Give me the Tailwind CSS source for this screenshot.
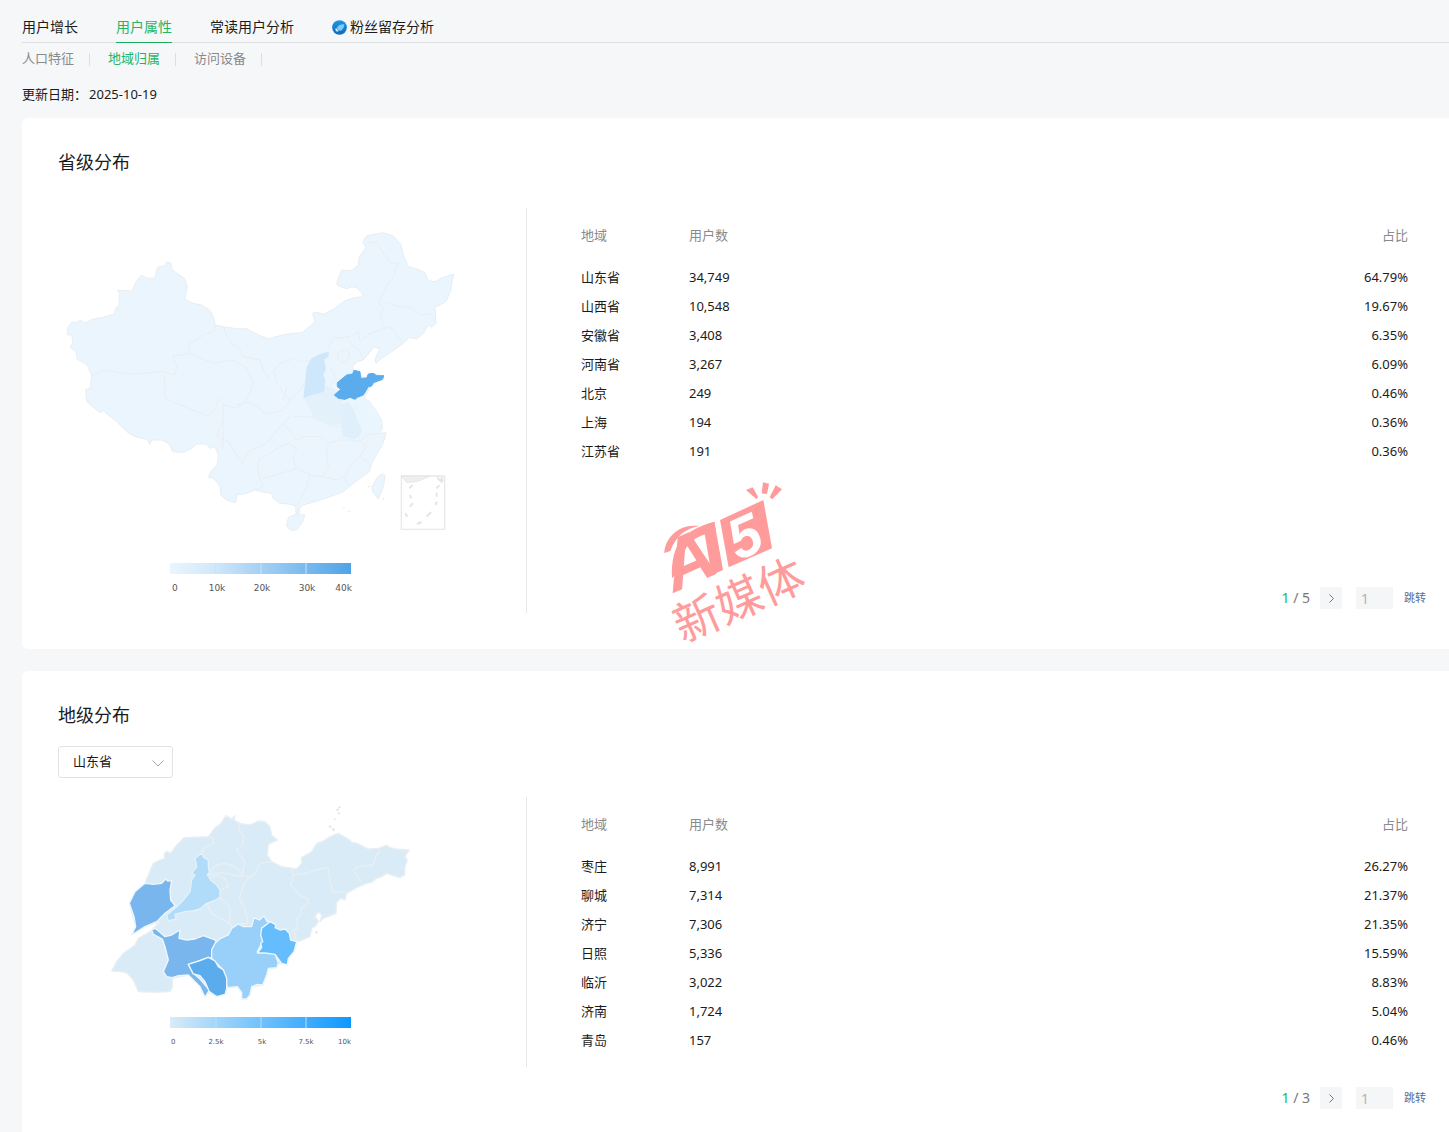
<!DOCTYPE html>
<html lang="zh-CN">
<head>
  <meta charset="UTF-8">
  <meta name="viewport" content="width=device-width, initial-scale=1.0">
  <title>用户属性 - 地域归属</title>
  <script src="https://cdn.jsdelivr.net/npm/@tailwindcss/browser@4"></script>
</head>
<body class="min-h-screen overflow-x-hidden bg-[#f6f7f9] pl-[22px] font-['Noto_Sans','Noto_Sans_CJK_SC',sans-serif] text-[13px] text-[#1a1b1c]">

  <!-- Main tabs -->
  <nav class="flex gap-[38px] border-b border-[#dddfe1] pt-3 text-sm">
    <a href="#" class="-mb-px flex h-[31px] items-center border-b border-transparent">用户增长</a>
    <a href="#" class="-mb-px flex h-[31px] items-center border-b border-[#1aad5c] text-[#22b566]">用户属性</a>
    <a href="#" class="-mb-px flex h-[31px] items-center border-b border-transparent">常读用户分析</a>
    <a href="#" class="-mb-px flex h-[31px] items-center gap-[3px] border-b border-transparent">
      <svg class="size-[15px]" viewBox="0 0 45 45" aria-hidden="true">
        <defs>
          <linearGradient id="badge" x1="0" y1="0" x2="0" y2="1">
            <stop offset="0" stop-color="#1e96e3"/>
            <stop offset="1" stop-color="#1268b8"/>
          </linearGradient>
        </defs>
        <circle cx="22.500" cy="22.500" r="22" fill="url(#badge)"/>
        <path d="M16 20Q23 12 37 13Q38 22 30 30Q24 34 18 30Q13 26 16 20Z" fill="#7ccbf8"/>
        <path d="M10 29Q10 25 13 25Q16 30 20 33Q17 36 13 34Z" fill="#d8f1ff"/>
      </svg>
      粉丝留存分析
    </a>
  </nav>

  <!-- Sub tabs -->
  <nav class="flex h-8 items-center text-[#888a8c]">
    <a href="#">人口特征</a>
    <span class="mr-[18px] ml-[15px] h-[13px] w-px bg-[#dcdee0]"></span>
    <a href="#" class="text-[#22b566]">地域归属</a>
    <span class="mr-[18px] ml-[15px] h-[13px] w-px bg-[#dcdee0]"></span>
    <a href="#">访问设备</a>
    <span class="ml-[15px] h-[13px] w-px bg-[#dcdee0]"></span>
  </nav>

  <p class="flex gap-[2px] pt-[9px] pb-[14px] leading-5"><span>更新日期：</span><time datetime="2025-10-19">2025-10-19</time></p>

  <!-- Provinces -->
  <section class="relative rounded-l-md bg-white pt-[30px] pb-9 pl-9">
    <h2 class="text-lg leading-7">省级分布</h2>
    <div class="mt-8 flex">
      <div class="w-[469px] shrink-0 self-start border-r border-[#e4e6e8]">
        <svg class="block w-full" viewBox="58 208 468 405" role="img" aria-label="省级分布地图">
          <defs>
            <linearGradient id="scaleProvince">
              <stop offset="0" stop-color="#ebf5fd"/>
              <stop offset="0.250" stop-color="#d0e7fa"/>
              <stop offset="1" stop-color="#4ea3e8"/>
            </linearGradient>
          </defs>
          <g transform="translate(50 220) scale(.33333)" stroke="#e9edf1" stroke-width="3" stroke-linejoin="round">
            <!-- mainland -->
            <path fill="#ebf5fd" d="M52 345V325L65 306L78 308L92 300L105 310L125 298L160 292L193 281L197 265L207 255L208 218L202 211L246 213L254 195L262 180L275 165L290 174L315 175L322 142L345 137L350 126L362 128L367 150L385 163L403 175L412 200L404 238L430 250L455 255L480 272L490 290L496 315L520 320L560 326L590 326L625 345L655 356L705 343L755 338L785 315L795 305L788 280L800 276L820 283L850 268L880 245L905 235L935 230L938 222L920 203L905 200L890 206L865 198L860 190L875 150L905 152L925 135L928 110L948 82L938 65L950 48L975 42L1000 38L1030 48L1052 72L1060 105L1075 140L1100 146L1125 158L1135 182L1155 185L1180 172L1212 162L1205 190L1202 215L1195 228L1188 245L1155 262L1158 310L1146 322L1135 315L1120 340L1100 357L1078 352L1060 370L1025 395L995 415L978 430L975 418L990 385L972 382L955 402L940 420L920 425L908 440L912 455L930 458L935 475L950 473L965 460L1000 468L965 495L942 535L960 545L978 572L995 600L998 628L985 640L1008 638L1000 668L985 695L965 730L958 755L930 775L900 798L880 815L840 830L805 842L760 855L748 865V880L738 882L737 858L715 852L690 850L670 836L664 820L635 816L615 810L590 820L560 825L557 848L530 840L512 825L510 800L492 775L475 772L485 750L502 735L505 705L495 680L480 685L470 672L440 672L425 685L400 697L368 695L358 672L335 660L305 660L300 673L292 658L255 650L230 635L200 605L160 573L150 578L110 545L107 508L120 505L125 468L112 435L82 418L78 395L60 382L68 370L66 345Z"/>
            <!-- islands -->
            <path fill="#ebf5fd" d="M715 892L735 884L765 885L758 905L740 930L722 931L710 918ZM985 768L1000 761L1005 770L1000 800L985 837L968 815L966 800Z"/>
            <!-- province borders -->
            <path fill="none" d="M125 468L160 450L240 463L340 455L375 465L380 440L368 408L400 405L415 398L490 430L545 420L585 440L610 485L600 520L580 550L560 565L520 555L505 535L495 570L475 588L440 575L345 535L343 470M415 395L420 370L460 345L490 335L496 315M520 320L530 350L550 375L565 380L580 410L630 420L640 450L660 480M520 555L518 690M560 555L600 545L650 582L700 570L720 540L700 520L690 500M518 600L500 650L535 665L575 730L600 690L630 680L660 660L680 630L700 610L720 590M625 720L660 700L690 680L715 670L740 685L730 715L740 745L710 755L640 775L625 765ZM625 765L640 800L615 810M740 660L760 650L815 650L835 670L830 700L835 740L820 770L780 765L740 745M700 610L740 660M835 670L870 660L905 660L930 665L925 640L880 625L830 610L780 590L730 590M930 665L950 680L930 710L905 730L885 770L860 780L820 770M780 765L770 800L745 850M885 770L890 790L900 798M930 710L960 730M985 640L950 645L930 665M995 620L960 610L930 580L915 560L930 540M680 490L670 455L690 430L735 415L750 425L790 420L810 405L835 400M720 540L750 510L765 490M710 500L700 540M835 380L850 355L900 350L925 335L930 365L960 340L1005 325L1020 320L1040 345L1060 368M865 395L885 388L900 400L890 425L875 428L862 412ZM890 350L905 375L925 385L940 420M840 440L860 480L840 495M1005 325L990 290L1000 265L985 245L1010 200L1030 170L1045 130L1025 130L1000 100L980 65L950 70M1000 245L1040 258L1090 265L1110 285L1140 280L1158 300"/>
            <!-- 山西 / 河南 / 安徽 / 江苏 / 山东 -->
            <path fill="#e3f1fb" stroke="none" d="M762 533L800 520L825 498L850 503L860 525L885 535L870 555L878 590L865 615L830 608L790 590Z"/>
            <path fill="#e0effc" stroke="none" d="M870 555L895 545L910 565L920 595L932 620L935 640L915 658L880 650L870 600Z"/>
            <path fill="#e9f6fd" stroke="none" d="M918 540L942 537L965 550L995 605L985 625L950 615L925 575Z"/>
            <path fill="#cfe7fa" stroke="none" d="M760 535L764 500L770 440L785 415L810 402L836 395V410L822 420L828 445L820 465L826 480L822 515L785 525Z"/>
            <path fill="#5aacec" stroke="#5aacec" d="M853 525L872 508L862 500V488L890 465L908 462L912 451L930 455L932 475L950 474L955 462L970 460L980 467H1001L998 478L970 488L965 498L955 500L940 525L922 532L915 538L900 532L885 538L865 535Z"/>
            <!-- South China Sea inset -->
            <path fill="none" stroke="#e8e9eb" stroke-width="4" d="M1054 768H1184V928H1054Z"/>
            <path fill="#efefef" stroke="#e4e5e7" d="M1054 768H1140L1100 785L1070 787Z"/>
            <path fill="none" stroke="#e4e5e7" stroke-width="6" d="M1078 805L1088 795M1080 825L1084 835M1079 860L1089 850M1066 880L1072 890M1101 912L1115 906M1130 890L1143 876M1156 855L1161 845M1160 830V818M1160 805L1168 796M1162 772L1170 782L1178 771M1173 788L1180 778"/>
            <path fill="none" stroke="#e0e4e8" d="M955 800H960M894 873L899 875M880 864H883M1001 834V839"/>
          </g>
          <!-- scale -->
          <rect x="170" y="563" width="181" height="11" fill="url(#scaleProvince)"/>
          <path d="M215.500 563V574M261 563V574M306 563V574" stroke="#c5e2fa" fill="none"/>
          <g class="text-[9px]" fill="#555" font-family="DejaVu Sans, sans-serif">
            <text x="172" y="591">0</text>
            <text x="217" y="591" text-anchor="middle">10k</text>
            <text x="262" y="591" text-anchor="middle">20k</text>
            <text x="307" y="591" text-anchor="middle">30k</text>
            <text x="352" y="591" text-anchor="end">40k</text>
          </g>
        </svg>
      </div>
      <div class="flex grow flex-col justify-between pb-1">
        <div class="pr-[41px] pl-[54px]">
          <table class="w-full">
            <thead>
              <tr class="h-[55px] text-left text-[#888a8c]">
                <th class="w-[108px] font-normal">地域</th>
                <th class="font-normal">用户数</th>
                <th class="text-right font-normal">占比</th>
              </tr>
            </thead>
            <tbody>
              <tr class="h-[29px]"><td>山东省</td><td>34,749</td><td class="text-right">64.79%</td></tr>
              <tr class="h-[29px]"><td>山西省</td><td>10,548</td><td class="text-right">19.67%</td></tr>
              <tr class="h-[29px]"><td>安徽省</td><td>3,408</td><td class="text-right">6.35%</td></tr>
              <tr class="h-[29px]"><td>河南省</td><td>3,267</td><td class="text-right">6.09%</td></tr>
              <tr class="h-[29px]"><td>北京</td><td>249</td><td class="text-right">0.46%</td></tr>
              <tr class="h-[29px]"><td>上海</td><td>194</td><td class="text-right">0.36%</td></tr>
              <tr class="h-[29px]"><td>江苏省</td><td>191</td><td class="text-right">0.36%</td></tr>
            </tbody>
          </table>
        </div>
        <div class="mt-8 flex h-[22px] items-center justify-end pr-[23px]">
          <span class="mr-[10px] text-sm text-[#777]"><span class="text-[#22b566]">1</span> / 5</span>
          <button type="button" aria-label="下一页" class="mr-[14px] flex size-[22px] items-center justify-center bg-[#f5f6f8]">
            <svg class="h-[9px] w-[5px]" viewBox="0 0 5 9" fill="none" stroke="#777"><path d="M.5.5L4.500 4.500L.5 8.500"/></svg>
          </button>
          <input type="text" placeholder="1" aria-label="省级页码" class="mr-[11px] h-[22px] w-[37px] bg-[#f5f6f8] pl-[5px] text-sm placeholder:text-[#b2b4b6]">
          <a href="#" class="text-[11px] text-[#576b95]">跳转</a>
        </div>
      </div>
    </div>

    <!-- Watermark -->
    <svg class="pointer-events-none absolute top-[352px] left-[628px] z-10 h-[190px] w-[170px] overflow-visible" viewBox="0 0 510 570" fill="#ff9b9b" role="img" aria-label="A5新媒体">
      <path d="M288 60L308 52L324 80L320 88ZM339 37L357 41L351 72L335 70ZM377 46L396 58L367 88L359 82Z"/>
      <path d="M43 249C45 205 85 160 148 168C105 176 78 198 61 243Z"/>
      <path d="M66 325C62 215 105 180 193 155L198 184C130 200 98 220 91 300Z"/>
      <path d="M160 168L193 155L219 300L185 315Z"/>
      <path d="M210 150L340 90L366 235L236 292Z"/>
      <text transform="translate(72 368) rotate(-24)" font-family="Liberation Sans, sans-serif" font-weight="700" font-style="italic" font-size="215">A</text>
      <text transform="translate(264 273) rotate(-24)" font-family="Liberation Sans, sans-serif" font-weight="700" font-style="italic" font-size="172" fill="#fff">5</text>
      <text transform="translate(98 520) rotate(-24)" font-family="Noto Sans CJK SC, sans-serif" font-size="138">新媒体</text>
    </svg>
  </section>

  <!-- Cities -->
  <section class="mt-[22px] rounded-tl-md bg-white pt-[30px] pb-5 pl-9">
    <h2 class="text-lg leading-7">地级分布</h2>
    <div class="relative mt-[17px] w-[115px]">
      <select aria-label="选择省份" class="h-8 w-full appearance-none rounded-[3px] border border-[#e1e3e5] bg-white pl-[14px]">
        <option>山东省</option>
      </select>
      <svg class="pointer-events-none absolute top-[14px] right-[9px] h-[7px] w-3" viewBox="0 0 12 7" fill="none" stroke="#a5a7a9"><path d="M.5.5L6 6L11.500.5"/></svg>
    </div>
    <div class="mt-[19px] flex">
      <div class="w-[469px] shrink-0 self-start border-r border-[#e4e6e8]">
        <svg class="block w-full" viewBox="58 797 468 270" role="img" aria-label="地级分布地图">
          <defs>
            <linearGradient id="scaleCity">
              <stop offset="0" stop-color="#d9ebf6"/>
              <stop offset="0.250" stop-color="#a3d6fa"/>
              <stop offset="1" stop-color="#0d98ff"/>
            </linearGradient>
          </defs>
          <g transform="translate(100 795) scale(.33333)" stroke="#e9eff2" stroke-width="4" stroke-linejoin="round">
            <path fill="#d9ebf6" d="M95 420L107 395L88 325L105 290L135 265L145 240L160 205L180 195L195 190L192 178L200 168L212 175L228 152L252 128L325 125L345 98L360 88L378 62L395 72L405 62L402 75L420 85L450 90L475 78L495 80L510 95L515 120L532 135L505 148L502 180L515 200L545 215L590 222L605 205L604 188L635 170L650 145L670 138L690 125L715 115L732 125L750 135L755 142L772 145L790 155L805 162L835 160L860 150L870 158L890 162L928 165L915 185L922 195L915 215L914 240L900 248L880 242L860 235L845 245L830 250L815 262L800 265L770 278L740 295L735 315L722 310L710 322L708 355L670 370L660 380L665 360L655 350L645 365L655 378L648 392L635 400L630 425L600 438L590 440L582 470L565 490L562 510L535 505L530 518L505 520L500 540L488 570L455 575L450 600L440 612H425V592L412 575L382 578L378 595L350 605L328 592L315 607L300 575L285 555L265 540L217 550L218 575L210 590L165 592L115 590L100 555L82 535L65 530L35 528L50 500L70 475L105 450L115 430L150 410L180 380L135 395Z"/>
            <path fill="none" d="M325 125L340 130V145L310 160L305 175M420 85L415 105L430 120L428 150L410 165L420 180L435 200L425 245L380 235L360 232L325 240M325 235L350 210L375 205L405 215L430 240L450 248L465 235L480 205L515 200M330 250L350 240L375 252L385 275L360 285M425 285L435 260L450 248M425 285L418 310L435 340L445 385L415 387M320 325L335 355L390 385L395 400M320 325L360 308L390 335L390 385M575 222L580 240L620 235L645 225L685 218L692 270L700 292L740 290M580 240L572 270L605 305L625 310L622 325L605 340L602 360L590 370L593 400L580 405L590 440M760 225L775 215L820 210L825 190L840 165M760 225L785 262M187 432L195 455L205 495L190 530L217 550"/>
            <path fill="#78b6ed" stroke="#eef7fd" d="M95 420L107 395L102 365L88 325L105 290L135 265L160 268L185 265L197 252L203 258L215 257L210 285L212 315L225 332L195 355L170 380L135 395Z"/>
            <path fill="#b0dcfa" stroke="#e3f2fc" d="M305 175L312 188L325 195V215L328 232L322 240L332 255L350 270L360 285V308L340 318L320 325L300 342L278 348L255 350L225 358L228 372L205 378L200 360L230 335L250 315L270 290L275 255L285 240L275 235L290 215L285 190Z"/>
            <path fill="#78b6ed" stroke="#eef7fd" d="M155 405L165 400L180 412L195 425L215 420L240 405L237 430L260 435L285 432L310 422L345 435L350 445L335 465V490L325 487L290 500L265 508L280 535L300 552L328 585L315 607L300 575L265 540L235 542L217 548L200 545L190 530L205 495L195 455L187 432L160 418Z"/>
            <path fill="#98d0fa" stroke="#eef7fd" d="M345 445L362 430L385 420L395 400L415 387L430 395L455 395L462 368L478 375L492 362L500 378L510 380L485 400L488 440L472 470L525 475L535 505L530 518L505 520L500 540L488 570L472 568L455 575L450 600L440 612H425V592L412 575L382 578L370 525L335 490V465Z"/>
            <path fill="#5aacec" stroke="#eef7fd" d="M325 487L345 498L355 515L370 525L380 550V580L375 598L350 605L328 590L315 560L300 542L280 537L265 508L300 497Z"/>
            <path fill="#65bdfd" stroke="#eef7fd" d="M510 380L528 390L525 398L540 405L555 402L568 415L572 435L590 440L582 470L565 490L562 510L545 505L525 478L495 474L472 474L485 458L482 445L488 440L482 420L485 400Z"/>
            <path fill="none" stroke="#dadfe3" stroke-width="5" d="M689 98L692 92M698 100L703 107M702 73H706M710 47L715 42M715 57L719 53M716 38L721 36M648 415L651 409"/>
          </g>
          <!-- scale -->
          <rect x="170" y="1017" width="181" height="11" fill="url(#scaleCity)"/>
          <path d="M216 1017V1028M261 1017V1028M306 1017V1028" stroke="#b9e0fc" fill="none"/>
          <g class="text-[7px]" fill="#555" font-family="DejaVu Sans, sans-serif">
            <text x="171" y="1044">0</text>
            <text x="216" y="1044" text-anchor="middle">2.5k</text>
            <text x="262" y="1044" text-anchor="middle">5k</text>
            <text x="306" y="1044" text-anchor="middle">7.5k</text>
            <text x="351" y="1044" text-anchor="end">10k</text>
          </g>
        </svg>
      </div>
      <div class="flex grow flex-col justify-between pb-1">
        <div class="pr-[41px] pl-[54px]">
          <table class="w-full">
            <thead>
              <tr class="h-[55px] text-left text-[#888a8c]">
                <th class="w-[108px] font-normal">地域</th>
                <th class="font-normal">用户数</th>
                <th class="text-right font-normal">占比</th>
              </tr>
            </thead>
            <tbody>
              <tr class="h-[29px]"><td>枣庄</td><td>8,991</td><td class="text-right">26.27%</td></tr>
              <tr class="h-[29px]"><td>聊城</td><td>7,314</td><td class="text-right">21.37%</td></tr>
              <tr class="h-[29px]"><td>济宁</td><td>7,306</td><td class="text-right">21.35%</td></tr>
              <tr class="h-[29px]"><td>日照</td><td>5,336</td><td class="text-right">15.59%</td></tr>
              <tr class="h-[29px]"><td>临沂</td><td>3,022</td><td class="text-right">8.83%</td></tr>
              <tr class="h-[29px]"><td>济南</td><td>1,724</td><td class="text-right">5.04%</td></tr>
              <tr class="h-[29px]"><td>青岛</td><td>157</td><td class="text-right">0.46%</td></tr>
            </tbody>
          </table>
        </div>
        <div class="mt-8 flex h-[22px] items-center justify-end pr-[23px]">
          <span class="mr-[10px] text-sm text-[#777]"><span class="text-[#22b566]">1</span> / 3</span>
          <button type="button" aria-label="下一页" class="mr-[14px] flex size-[22px] items-center justify-center bg-[#f5f6f8]">
            <svg class="h-[9px] w-[5px]" viewBox="0 0 5 9" fill="none" stroke="#777"><path d="M.5.5L4.500 4.500L.5 8.500"/></svg>
          </button>
          <input type="text" placeholder="1" aria-label="地级页码" class="mr-[11px] h-[22px] w-[37px] bg-[#f5f6f8] pl-[5px] text-sm placeholder:text-[#b2b4b6]">
          <a href="#" class="text-[11px] text-[#576b95]">跳转</a>
        </div>
      </div>
    </div>
  </section>
</body>
</html>
